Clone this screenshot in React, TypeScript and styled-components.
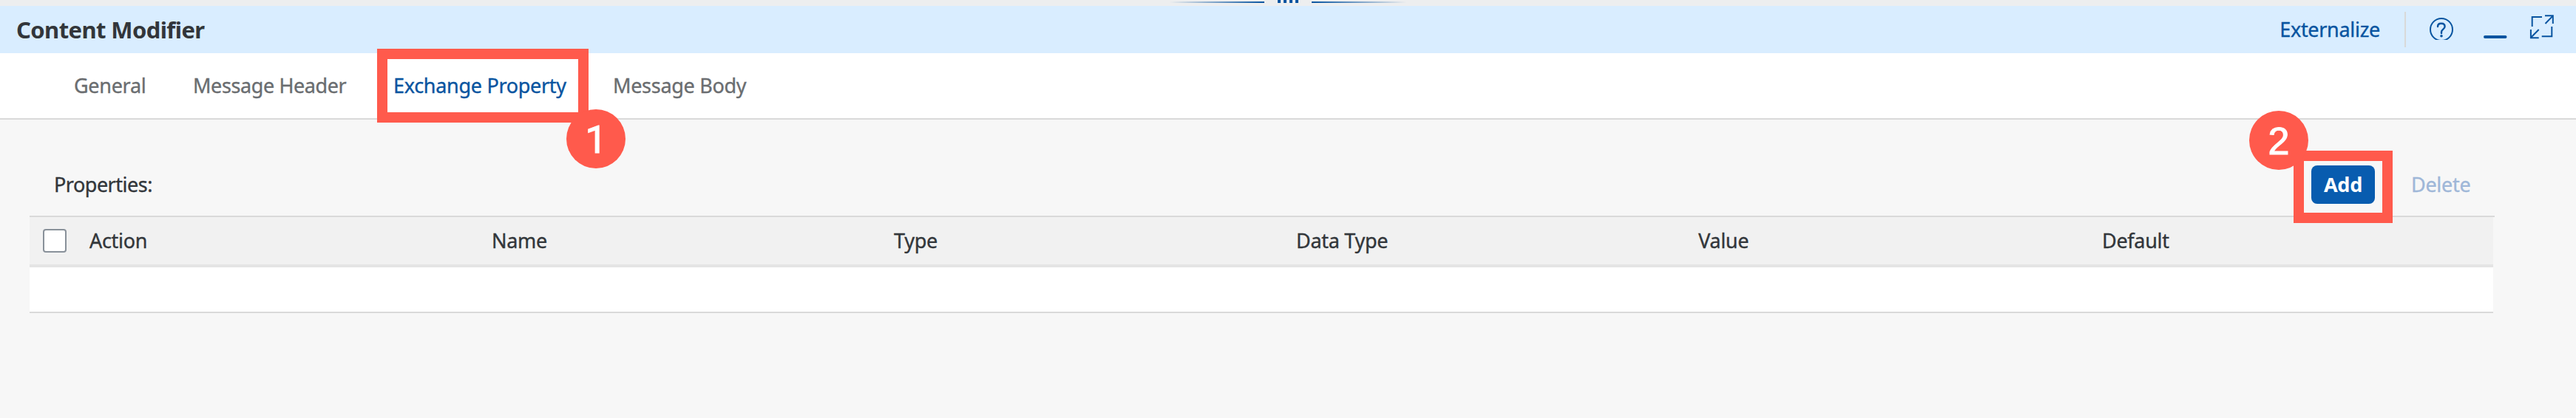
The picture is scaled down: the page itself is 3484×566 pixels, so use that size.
import React from "react";
import styled, { createGlobalStyle } from "styled-components";

const GlobalStyle = createGlobalStyle`
  * { box-sizing: border-box; }
  body { margin: 0; background: #f7f7f7; color: #32363a; font-family: "Noto Sans", sans-serif; font-size: 27px; }
`;

const Page = styled.div`
  width: 3484px;
  height: 566px;
  overflow: hidden;
  background: #f7f7f7;
`;

const Text = styled.span<{ $spacing?: number }>`
  display: block;
  line-height: 40px;
  white-space: nowrap;
  letter-spacing: ${(p) => p.$spacing ?? -0.3}px;
  -webkit-text-stroke: 0.35px currentColor;
`;

const Splitter = styled.div`
  display: flex;
  justify-content: center;
  gap: 18px;
  height: 8px;
  background: #edeeef;
`;

const SplitterLine = styled.div<{ $toward: string }>`
  width: 128px;
  height: 2px;
  margin-top: 2px;
  background: linear-gradient(to ${(p) => p.$toward}, rgba(8, 84, 160, 0), #0854a0);
`;

const Grip = styled.div`
  display: flex;
  gap: 4px;
  height: 4px;
`;

const GripDot = styled.i`
  width: 4px;
  background: #0854a0;
`;

const Header = styled.header`
  display: flex;
  justify-content: space-between;
  height: 64px;
  padding: 0 28px 0 22px;
  background: #d9edff;
`;

const Title = styled.h1`
  margin: 9px 0 0;
  font-size: 31px;
  font-weight: 700;
  line-height: 46px;
  letter-spacing: -0.6px;
`;

const HeaderActions = styled.div`
  display: flex;
  color: #0854a0;
`;

const LinkButton = styled.button`
  height: 40px;
  margin-top: 12px;
  padding: 0;
  border: 0;
  background: none;
  color: inherit;
  font: inherit;
`;

const Divider = styled.div`
  width: 2px;
  height: 48px;
  margin: 8px 30px 0 33px;
  background: #d9d9d9;
`;

const HeaderIcon = styled.svg<{ $gap?: number }>`
  width: 36px;
  height: 36px;
  margin: 10px ${(p) => p.$gap ?? 0}px 0 0;
  fill: none;
  stroke: currentColor;
  stroke-width: 2;
`;

const Tabs = styled.nav`
  display: flex;
  height: 90px;
  padding-left: 100px;
  border-bottom: 2px solid #d9d9d9;
  background: #fff;
`;

const Tab = styled.div<{ $selected?: boolean; $width: number }>`
  position: relative;
  width: ${(p) => p.$width}px;
  padding-top: 24px;
  color: ${(p) => (p.$selected ? "#0854a0" : "#6a6d70")};
`;

const Highlight = styled.div<{ $x: number; $y: number; $w: number; $h: number }>`
  position: absolute;
  left: ${(p) => p.$x}px;
  top: ${(p) => p.$y}px;
  width: ${(p) => p.$w}px;
  height: ${(p) => p.$h}px;
  border: 14px solid #ff5a4c;
`;

const Step = styled.div<{ $x: number; $y: number; $face: string }>`
  position: absolute;
  left: ${(p) => p.$x}px;
  top: ${(p) => p.$y}px;
  width: 80px;
  height: 80px;
  border-radius: 50%;
  background: #ff5a4c;
  color: #fff;
  font: 52px/83px "${(p) => p.$face}", sans-serif;
  -webkit-text-stroke: 1.2px #fff;
  text-align: center;
  z-index: 2;
`;

const Toolbar = styled.div`
  display: flex;
  width: 3334px;
  height: 132px;
  padding: 60px 34px 0 33px;
  margin-left: 40px;
  border-bottom: 2px solid #d9d9d9;
`;

const ToolbarLabel = styled.div`
  flex: 1;
  padding-top: 8px;
`;

const AddSlot = styled.div`
  position: relative;
  margin-right: 49px;
`;

const AddButton = styled.button`
  display: block;
  width: 86px;
  height: 52px;
  margin-top: 2px;
  padding: 0;
  border: 0;
  border-radius: 8px;
  background: #085caf;
  color: #fff;
  font: 700 27px/50px "Noto Sans", sans-serif;
  letter-spacing: -0.2px;
`;

const DeleteLabel = styled.div`
  width: 79px;
  padding-top: 8px;
  color: #9fb7d8;
`;

const Table = styled.section`
  width: 3332px;
  margin-left: 40px;
`;

const HeadRow = styled.div`
  display: grid;
  grid-template-columns: 81px repeat(4, 544px) 546px 1fr;
  align-items: start;
  height: 68px;
  border-bottom: 4px solid #e4e4e4;
  background: #f1f1f1;
`;

const Checkbox = styled.div`
  width: 32px;
  height: 32px;
  margin: 16px 0 0 18px;
  border: 2px solid #89919a;
  border-radius: 4px;
  background: #fff;
`;

const HeadCell = styled.div`
  padding-top: 12px;
`;

const EmptyRow = styled.div`
  height: 62px;
  border-bottom: 2px solid #d9d9d9;
  background: #fff;
`;

const columns = ["Action", "Name", "Type", "Data Type", "Value", "Default"];

export default function App() {
  return (
    <Page>
      <GlobalStyle />
      <Splitter>
        <SplitterLine $toward="right" />
        <Grip>
          <GripDot /><GripDot /><GripDot /><GripDot />
        </Grip>
        <SplitterLine $toward="left" />
      </Splitter>
      <Header>
        <Title>Content Modifier</Title>
        <HeaderActions>
          <LinkButton><Text>Externalize</Text></LinkButton>
          <Divider />
          <HeaderIcon $gap={38} viewBox="0 0 36 36">
            <circle cx="18" cy="22" r="15" />
            <path d="M13 18C13 15 15.2 13.8 17.8 13.8C20.8 13.8 22.6 15.5 22.6 18C22.6 21.6 18 21.6 18 25.2V27" strokeWidth="2.4" strokeLinecap="round" />
            <circle cx="18" cy="30.8" r="1.8" fill="currentColor" stroke="none" />
          </HeaderIcon>
          <HeaderIcon $gap={26} viewBox="0 0 36 36">
            <path d="M3 32H30.5" strokeWidth="4" strokeLinecap="round" />
          </HeaderIcon>
          <HeaderIcon viewBox="0 0 36 36">
            <path d="M4.7 18V5H18M31.3 18V31.2H17.7M22 3.2H32.8V14M22.5 14L32.6 3.6M2.9 22V33.2H13.7M13.7 22L3.1 32.8" />
          </HeaderIcon>
        </HeaderActions>
      </Header>
      <Tabs>
        <Tab $width={161}><Text>General</Text></Tab>
        <Tab $width={271}><Text $spacing={-0.4}>Message Header</Text></Tab>
        <Tab $selected $width={297}>
          <Text>Exchange Property</Text>
          <Highlight $x={-22} $y={-6} $w={286} $h={100} />
          <Step $x={234} $y={76} $face="Roboto">1</Step>
        </Tab>
        <Tab $width={200}><Text>Message Body</Text></Tab>
      </Tabs>
      <Toolbar>
        <ToolbarLabel><Text $spacing={-0.5}>Properties:</Text></ToolbarLabel>
        <AddSlot>
          <AddButton>Add</AddButton>
          <Highlight $x={-24} $y={-18} $w={134} $h={98} />
          <Step $x={-84} $y={-72} $face="Liberation Sans">2</Step>
        </AddSlot>
        <DeleteLabel><Text>Delete</Text></DeleteLabel>
      </Toolbar>
      <Table>
        <HeadRow>
          <Checkbox />
          {columns.map((c) => (
            <HeadCell key={c}><Text>{c}</Text></HeadCell>
          ))}
        </HeadRow>
        <EmptyRow />
      </Table>
    </Page>
  );
}
